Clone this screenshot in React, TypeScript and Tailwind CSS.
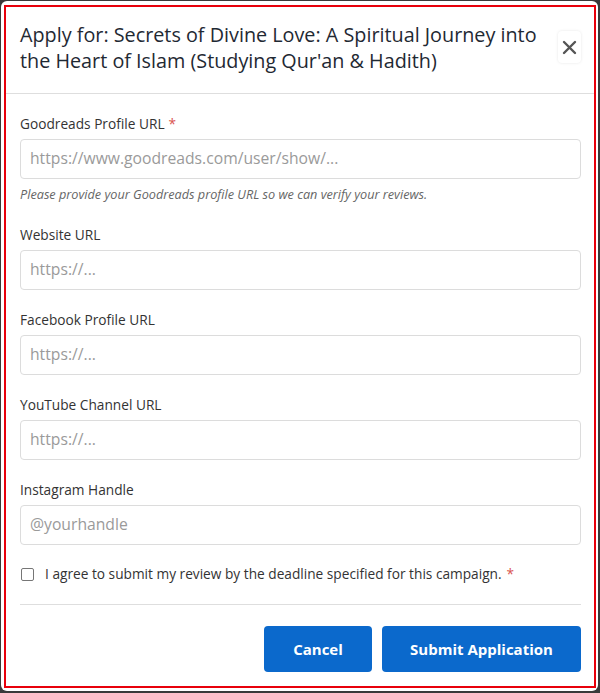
import React from "react";

const font = { fontFamily: '"Open Sans", "Noto Sans", sans-serif' };

function Field({ label, placeholder, required, help }: { label: string; placeholder: string; required?: boolean; help?: string }) {
  return (
    <div className={help ? "mb-[22px]" : "mb-[20px]"}>
      <div className="text-[13.7px] leading-[20px] text-[#333] mb-[5px]">
        {label}
        {required && <span className="text-[#d9534f] ml-[4px]">*</span>}
      </div>
      <div className="h-[40px] rounded-[4px] border border-[#dcdcdc] flex items-center px-[9px] text-[15.7px] text-[#9a9a9a]">
        {placeholder}
      </div>
      {help && (
        <div className="mt-[6px] text-[12.7px] leading-[18px] italic text-[#666]">{help}</div>
      )}
    </div>
  );
}

export default function App() {
  return (
    <div className="w-[600px] h-[693px] bg-[#3a3a3a] pt-px pl-px" style={font}>
      <div className="w-[597px] h-[690px] bg-white rounded-[6px] pt-[4px] pl-[3px]">
        <div className="w-[592px] h-[683px] border-2 border-[#e8000b]">
          <div className="flex items-start justify-between pl-[14px] pr-[13px] pt-[15px] pb-[19px] border-b border-[#dedede]">
            <div className="text-[19.8px] leading-[26px] text-[#1f2933] w-[530px]">
              Apply for: Secrets of Divine Love: A Spiritual Journey into the Heart of Islam (Studying Qur'an &amp; Hadith)
            </div>
            <div className="mt-[9px] w-[23px] h-[32px] rounded-[4px] bg-white shadow-[0_0_3px_rgba(0,0,0,0.1)] flex items-center justify-center">
              <svg width="15" height="15" viewBox="0 0 15 15" fill="none" stroke="#555" strokeWidth="2.4" strokeLinecap="round">
                <path d="M2 2 L13 13 M13 2 L2 13" />
              </svg>
            </div>
          </div>
          <div className="pl-[14px] pr-[13px] pt-[20px]">
            <Field
              label="Goodreads Profile URL"
              required
              placeholder="https://www.goodreads.com/user/show/..."
              help="Please provide your Goodreads profile URL so we can verify your reviews."
            />
            <Field label="Website URL" placeholder="https://..." />
            <Field label="Facebook Profile URL" placeholder="https://..." />
            <Field label="YouTube Channel URL" placeholder="https://..." />
            <Field label="Instagram Handle" placeholder="@yourhandle" />
            <div className="-mt-[1px] flex items-center h-[20px] text-[13.7px] text-[#333]">
              <div className="ml-px w-[13px] h-[13px] rounded-[2px] border border-[#767676] bg-white" />
              <span className="ml-[11px]">
                I agree to submit my review by the deadline specified for this campaign.
                <span className="text-[#d9534f] ml-[5px]">*</span>
              </span>
            </div>
            <div className="mt-[20px] border-t border-[#dedede]" />
            <div className="mt-[21px] flex justify-end gap-[10px]">
              <div className="w-[108px] h-[46px] rounded-[4px] bg-[#0b69cc] text-white font-bold text-[15px] flex items-center justify-center">
                Cancel
              </div>
              <div className="w-[199px] h-[46px] rounded-[4px] bg-[#0b69cc] text-white font-bold text-[15px] flex items-center justify-center">
                Submit Application
              </div>
            </div>
          </div>
        </div>
      </div>
    </div>
  );
}
